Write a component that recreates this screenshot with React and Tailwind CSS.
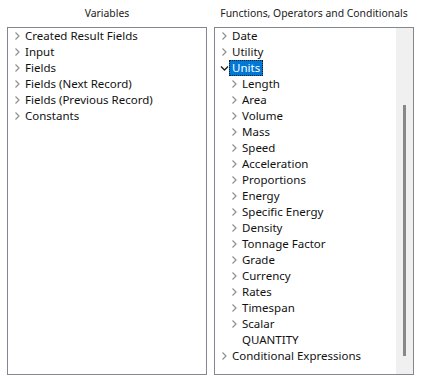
import React from 'react';

const Chevron = ({ open = false }) =>
  open ? (
    <svg width="9" height="16" viewBox="0 0 9 16" className="shrink-0">
      <path d="M1 6.5 L4.5 10 L8 6.5" fill="none" stroke="#1a1a1a" strokeWidth="1.3" />
    </svg>
  ) : (
    <svg width="9" height="16" viewBox="0 0 9 16" className="shrink-0">
      <path d="M2.5 4.5 L6 8 L2.5 11.5" fill="none" stroke="#909090" strokeWidth="1.2" />
    </svg>
  );

const Row = ({ label, indent = 0, leaf = false, open = false, selected = false }) => (
  <div className="flex h-4 items-center" style={{ paddingLeft: indent }}>
    {leaf ? <span className="w-[9px] shrink-0" /> : <Chevron open={open} />}
    {selected ? (
      <span className="flex h-4 items-center bg-[#0078d7] px-[3px] text-white outline-1 outline-dotted outline-[#1a1a1a] -outline-offset-1">
        {label}
      </span>
    ) : (
      <span className="ml-[3px] whitespace-nowrap">{label}</span>
    )}
  </div>
);

const variables = [
  'Created Result Fields',
  'Input',
  'Fields',
  'Fields (Next Record)',
  'Fields (Previous Record)',
  'Constants',
];

const units = [
  'Length', 'Area', 'Volume', 'Mass', 'Speed', 'Acceleration', 'Proportions', 'Energy',
  'Specific Energy', 'Density', 'Tonnage Factor', 'Grade', 'Currency', 'Rates', 'Timespan', 'Scalar',
];

export default function App() {
  return (
    <div className="flex h-[387px] w-[424px] gap-[7px] bg-white pl-[7px] text-[11.5px] leading-4 text-[#111]" style={{ fontFamily: '"Noto Sans", "Open Sans", sans-serif' }}>
      <div className="flex w-[200px] flex-col">
        <div className="flex h-[27px] items-center justify-center pb-[1px] text-[10.4px] text-[#1a1a1a]">Variables</div>
        <div className="h-[348px] border border-[#828790] pl-[5px]">
          {variables.map((v) => (
            <Row key={v} label={v} />
          ))}
        </div>
      </div>
      <div className="flex w-[200px] flex-col">
        <div className="flex h-[27px] items-center justify-center whitespace-nowrap pb-[1px] text-[10.4px] text-[#1a1a1a]">
          Functions, Operators and Conditionals
        </div>
        <div className="flex h-[348px] border border-[#828790]">
          <div className="flex-1 pl-[5px]">
            <Row label="Date" />
            <Row label="Utility" />
            <Row label="Units" open selected />
            {units.map((u) => (
              <Row key={u} label={u} indent={10} />
            ))}
            <Row label="QUANTITY" indent={10} leaf />
            <Row label="Conditional Expressions" />
          </div>
          <div className="flex w-[17px] justify-center bg-[#f0f0f0]">
            <div className="mt-[77px] h-[251px] w-[3px] bg-[#888888]" />
          </div>
        </div>
      </div>
    </div>
  );
}
